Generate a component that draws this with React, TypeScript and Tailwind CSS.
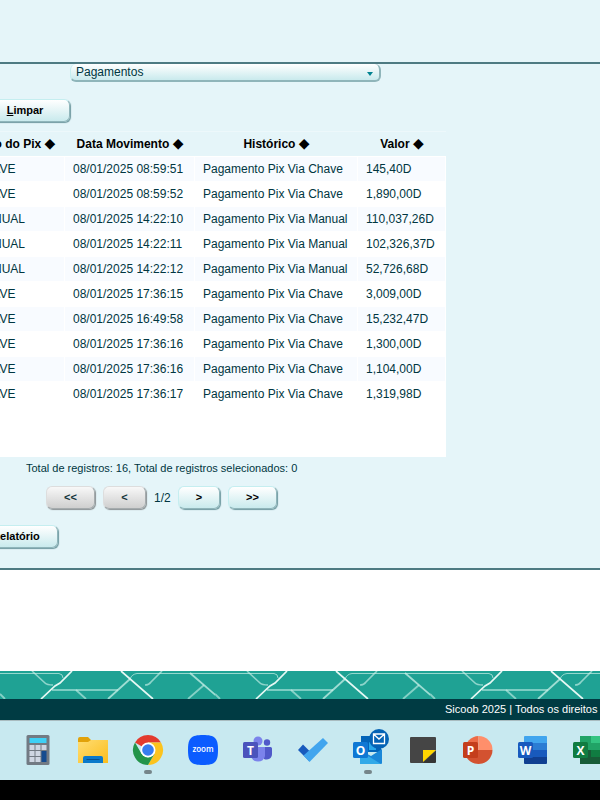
import type { ReactNode } from "react";

const rows = [
  ["CHAVE", "08/01/2025 08:59:51", "Pagamento Pix Via Chave", "145,40D"],
  ["CHAVE", "08/01/2025 08:59:52", "Pagamento Pix Via Chave", "1,890,00D"],
  ["MANUAL", "08/01/2025 14:22:10", "Pagamento Pix Via Manual", "110,037,26D"],
  ["MANUAL", "08/01/2025 14:22:11", "Pagamento Pix Via Manual", "102,326,37D"],
  ["MANUAL", "08/01/2025 14:22:12", "Pagamento Pix Via Manual", "52,726,68D"],
  ["CHAVE", "08/01/2025 17:36:15", "Pagamento Pix Via Chave", "3,009,00D"],
  ["CHAVE", "08/01/2025 16:49:58", "Pagamento Pix Via Chave", "15,232,47D"],
  ["CHAVE", "08/01/2025 17:36:16", "Pagamento Pix Via Chave", "1,300,00D"],
  ["CHAVE", "08/01/2025 17:36:16", "Pagamento Pix Via Chave", "1,104,00D"],
  ["CHAVE", "08/01/2025 17:36:17", "Pagamento Pix Via Chave", "1,319,98D"],
];

const columns = [
  { title: "Tipo do Pix", width: "w-[98px]" },
  { title: "Data Movimento", width: "w-[130px]" },
  { title: "Histórico", width: "w-[163px]" },
  { title: "Valor", width: "w-[88px]" },
];

function Button({ children, className, disabled, label }: { children: ReactNode; className: string; disabled?: boolean; label?: string }) {
  const tone = disabled
    ? "from-[#f8f8f8] to-[#cfcfcf] border-t-[#dddddd] border-l-[#dddddd] border-r-[#a5abad] border-b-[#a5abad] shadow-[1px_1px_1px_#8b9294] text-[#12343a]"
    : "from-white to-[#c9eaed] border-t-[#c5eef0] border-l-[#c5eef0] border-r-[#8fb5ba] border-b-[#8fb5ba] shadow-[1px_1px_1px_#6f9aa0] text-black";
  return (
    <button
      type="button"
      disabled={disabled}
      aria-label={label}
      className={`h-[23px] shrink-0 rounded-md border bg-linear-to-b pb-[2px] text-[11px] leading-4 font-bold ${tone} ${className}`}
    >
      {children}
    </button>
  );
}

function Pattern() {
  return (
    <svg className="block h-7 w-full bg-[#1fa294]" aria-hidden="true">
      <defs>
        <pattern id="lattice" width="215" height="28" patternUnits="userSpaceOnUse">
          <g fill="none" stroke="#c9f0e8">
            <path d="M0 2.500H59Q63 3 63 7M215 2.500H137Q132 3 130 8" strokeOpacity=".7" />
            <path d="M32 0L45 12Q47 14 53 14M162 0L151 11Q149 14 145 14" strokeWidth="1.600" strokeOpacity=".65" />
            <path d="M52 19H118" strokeWidth="2" strokeOpacity=".55" />
            <path d="M76 19L86 28M0 23L5 28M204 14L188 28" strokeWidth="1.800" strokeOpacity=".6" />
            <path d="M190 2L220 28M108 28L130 8" strokeWidth="1.800" strokeOpacity=".75" />
            <path d="M72 0L60 12L55 15L41 28M121 0L153 28" stroke="#e6f8f4" strokeWidth="1.700" />
          </g>
        </pattern>
      </defs>
      <rect width="100%" height="28" fill="url(#lattice)" />
    </svg>
  );
}

function Icon({ name, running, children }: { name: string; running?: boolean; children: ReactNode }) {
  return (
    <button type="button" aria-label={name} className="flex h-full w-[55px] shrink-0 flex-col items-center pt-[13px]">
      <svg viewBox="0 0 32 32" className="size-8 overflow-visible" fontFamily="'Open Sans', sans-serif" fontWeight="700">
        {children}
      </svg>
      {running && <span className="mt-1 h-1 w-2 rounded-full bg-[#75858a]" />}
    </button>
  );
}

function Taskbar() {
  return (
    <nav aria-label="Barra de tarefas" className="flex h-[60px] overflow-hidden border-t border-[#a9bcc0] bg-[#c8e9f0] pl-[10px]">
      <Icon name="Calculadora">
        <rect x="4.500" y="1" width="23" height="30" rx="1.500" fill="#727a83" />
        <rect x="7.500" y="4" width="17" height="5" fill="#3fd0f5" />
        <path d="M7.500 11h5v5h-5zM13.500 11h5v5h-5zM19.500 11h5v5h-5zM7.500 17h5v5h-5zM13.500 17h5v5h-5zM7.500 23h5v5h-5zM13.500 23h5v5h-5z" fill="#cfd6e2" />
        <path d="M19.500 17h5v11h-5z" fill="#154b8f" />
      </Icon>
      <Icon name="Explorador de Arquivos">
        <defs>
          <linearGradient id="folder" x2="1" y2="1"><stop stopColor="#ffdd73" /><stop offset="1" stopColor="#fbbd1c" /></linearGradient>
        </defs>
        <path d="M1 5Q1 3 3 3h8l3 3h15q2 0 2 2v6H1z" fill="#e2a20a" />
        <path d="M1 8h10l3-2h17v23H1z" fill="url(#folder)" />
        <path d="M6 29v-5q0-2 2-2h16q2 0 2 2v5z" fill="#0b79ca" />
        <path d="M9.500 25.500h13" stroke="#07518f" />
      </Icon>
      <Icon name="Chrome" running>
        <path d="M16 16L3 8.500A15 15 0 0 1 29 8.500H16z" fill="#e33b2e" />
        <path d="M16 8.500H29A15 15 0 0 1 16 31L22.500 19.700z" fill="#fcc31e" />
        <path d="M3 8.500L9.500 19.700L16 23.500L22.500 19.700L16 31A15 15 0 0 1 3 8.500z" fill="#23944a" />
        <circle cx="16" cy="16" r="7.500" fill="#fff" />
        <circle cx="16" cy="16" r="5.800" fill="#377df0" />
      </Icon>
      <Icon name="Zoom">
        <path d="M16 1C28 1 31 4 31 16S28 31 16 31S1 28 1 16S4 1 16 1z" fill="#0b5cff" />
        <text x="16" y="18" textAnchor="middle" fontSize="8" fontWeight="600" fill="#fff">zoom</text>
      </Icon>
      <Icon name="Teams">
        <circle cx="25" cy="8.500" r="3.200" fill="#5059c9" />
        <path d="M22 13h6.500q1.500 0 1.500 1.500V20a5.500 5.500 0 0 1-8 5z" fill="#5059c9" />
        <circle cx="16" cy="7" r="4.500" fill="#7b83eb" />
        <path d="M9 13h14v9a7.200 7.200 0 0 1-14 0z" fill="#7b83eb" />
        <rect x="1" y="8" width="15" height="16" rx="1.500" fill="#4b53bc" />
        <text x="8.500" y="20.500" textAnchor="middle" fontSize="12" fill="#fff">T</text>
      </Icon>
      <Icon name="To Do">
        <path d="M1 16l5-5.500 10.500 10.500L12 27z" fill="#185abd" />
        <path d="M6.500 21.500L26 4l5 5L12.500 28z" fill="#41a5ee" />
      </Icon>
      <Icon name="Outlook" running>
        <path d="M9 2h20v16H9z" fill="#0364b8" />
        <path d="M17 8h7v8h-7z" fill="#28a8ea" />
        <path d="M8 16l11 6 11-7v14q0 1-1 1H9q-1 0-1-1z" fill="#1a87d8" />
        <path d="M8 17l21 13H9q-1 0-1-1z" fill="#32a9e8" />
        <rect x="1" y="8" width="15" height="16" rx="1.500" fill="#0f78d4" />
        <text x="8.500" y="20.500" textAnchor="middle" fontSize="12" fill="#fff">O</text>
        <circle cx="27" cy="5" r="10" fill="#0563b5" />
        <path d="M21.500 0h11v9.500h-11zl5.500 5 5.500-5" fill="none" stroke="#fff" strokeWidth="1.300" />
      </Icon>
      <Icon name="Notas">
        <path d="M4 3h24q1 0 1 1v12L17 29H4q-1 0-1-1V4q0-1 1-1z" fill="#454545" />
        <path d="M29 16v12q0 1-1 1H16z" fill="#353535" />
        <path d="M16 16h13L16 28z" fill="#ffd600" />
      </Icon>
      <Icon name="PowerPoint">
        <path d="M16.500 16V2A14 14 0 0 0 3 16z" fill="#ed6c47" />
        <path d="M16.500 2A14 14 0 0 1 30.500 16h-14z" fill="#ff8f6b" />
        <path d="M2.500 16h28a14 14 0 0 1-28 0z" fill="#d35230" />
        <rect x="1" y="8" width="15" height="16" rx="1.500" fill="#c43e1c" />
        <text x="8.500" y="20.500" textAnchor="middle" fontSize="12" fill="#fff">P</text>
      </Icon>
      <Icon name="Word">
        <path d="M8 2h21q1 0 1 1v6H7V3q0-1 1-1z" fill="#41a5ee" />
        <path d="M7 9h23v7H7z" fill="#2b7cd3" />
        <path d="M7 16h23v7H7z" fill="#185abd" />
        <path d="M7 23h23v6q0 1-1 1H8q-1 0-1-1z" fill="#103f91" />
        <rect x="1" y="8" width="15" height="16" rx="1.500" fill="#185abd" />
        <text x="8.500" y="20.500" textAnchor="middle" fontSize="12" fill="#fff">W</text>
      </Icon>
      <Icon name="Excel">
        <path d="M8 2h11v14H8z" fill="#21a366" />
        <path d="M19 2h12v7H19z" fill="#33c481" />
        <path d="M19 9h12v7H19z" fill="#21a366" />
        <path d="M8 16h11v14H8z" fill="#185c37" />
        <path d="M19 16h12v7H19z" fill="#107c41" />
        <path d="M19 23h12v7H19z" fill="#185c37" />
        <rect x="1" y="8" width="15" height="16" rx="1.500" fill="#107c41" />
        <text x="8.500" y="20.500" textAnchor="middle" fontSize="12" fill="#fff">X</text>
      </Icon>
    </nav>
  );
}

export default function App() {
  return (
    <div className="w-full overflow-hidden bg-white font-['Liberation_Sans',Arial,sans-serif] text-xs text-[#003641]">
      <header className="h-[62px] bg-[#e5f5f9]" />
      <main className="border-y-2 border-[#4d7a82] bg-[#e5f5f9] pb-5">
        <div className="relative ml-[70px] w-[311px]">
          <select
            aria-label="Tipo de movimento"
            className="block h-[18px] w-full appearance-none rounded-md border border-t-0 border-r-2 border-b-2 border-[#c5eef0] border-r-[#8fb5ba] border-b-[#8fb5ba] bg-linear-to-b from-white to-[#c9eaed] pl-[5px] text-xs leading-4"
          >
            <option>Pagamentos</option>
          </select>
          <svg viewBox="0 0 6 4" className="pointer-events-none absolute top-2 right-2 h-1 w-[6px]" aria-hidden="true">
            <path d="M0 0h6L3 4z" fill="#008391" />
          </svg>
        </div>

        <Button className="mt-[17px] -ml-5 block w-[90px]">
          <span className="underline">L</span>impar
        </Button>

        <div className="-ml-[33px] mt-[9px] h-[326px] w-[479px] bg-white">
          <table className="w-full table-fixed border-separate border-spacing-0">
            <thead>
              <tr className="h-[25px] bg-[#e5f5f9] text-black">
                {columns.map((c) => (
                  <th key={c.title} scope="col" className={`${c.width} border-t border-[#edf8fb] p-0 leading-4 font-bold whitespace-nowrap`}>
                    {c.title} <span className="font-['DejaVu_Sans'] text-sm leading-3 font-normal">◆</span>
                  </th>
                ))}
              </tr>
            </thead>
            <tbody>
              {rows.map((r, i) => (
                <tr key={i} className="h-[25px] odd:bg-[#f8fbff]">
                  {r.map((cell, j) => (
                    <td key={j} className="border-t border-r border-white py-0 pl-2 leading-4 whitespace-nowrap">{cell}</td>
                  ))}
                </tr>
              ))}
            </tbody>
          </table>
        </div>

        <p className="mt-[3px] ml-[26px] text-[11px] leading-4">Total de registros: 16, Total de registros selecionados: 0</p>

        <div className="mt-[10px] ml-[46px] flex items-center gap-2">
          <Button disabled label="Primeira página" className="w-[49px]">&lt;&lt;</Button>
          <Button disabled label="Página anterior" className="w-[43px]">&lt;</Button>
          <span className="w-4 leading-4">1/2</span>
          <Button label="Próxima página" className="w-[42px]">&gt;</Button>
          <Button label="Última página" className="w-[49px]">&gt;&gt;</Button>
        </div>

        <Button className="mt-4 -ml-[26px] block w-[84px]">Relatório</Button>
      </main>

      <div className="h-[101px]" />
      <footer className="overflow-hidden bg-[#003b43]">
        <Pattern />
        <p className="ml-[445px] h-[21px] text-[11px] leading-[21px] whitespace-nowrap text-white">
          Sicoob 2025 | Todos os direitos reservados
        </p>
      </footer>
      <Taskbar />
      <div className="h-5 bg-black" />
    </div>
  );
}
